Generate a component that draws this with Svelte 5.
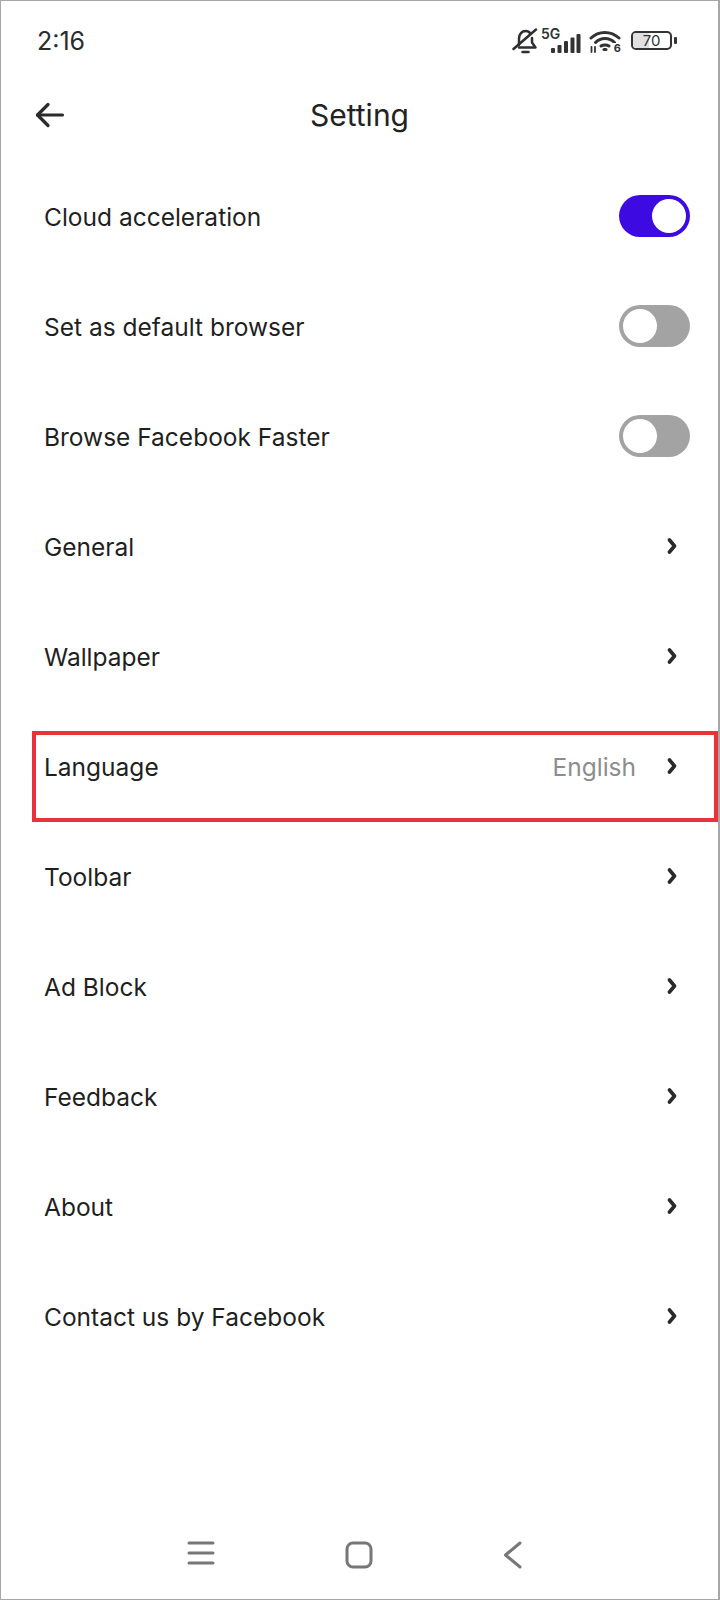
<script>
  const rows = [
    { label: 'Cloud acceleration', toggle: true, on: true },
    { label: 'Set as default browser', toggle: true, on: false },
    { label: 'Browse Facebook Faster', toggle: true, on: false },
    { label: 'General' },
    { label: 'Wallpaper' },
    { label: 'Language', value: 'English', marked: true },
    { label: 'Toolbar' },
    { label: 'Ad Block' },
    { label: 'Feedback' },
    { label: 'About' },
    { label: 'Contact us by Facebook' }
  ];
</script>

<div class="screen">
  <div class="status">
    <span class="time">2:16</span>
    <div class="status-icons">
      <svg class="bell" width="26" height="26" viewBox="0 0 26 26" fill="none" stroke="#2e2e2e" stroke-width="2.500" stroke-linecap="round" stroke-linejoin="round">
        <path d="M7 17V10.500C7 6 10 3 13.500 3c2.200 0 4 1 5 2.600" />
        <path d="M20 10v4.500l3.500 5H7" />
        <path d="M1.500 21 L24 1.500" />
        <path d="M10.500 24h6" />
      </svg>
      <div class="signal">
        <span class="net">5G</span>
        <svg width="30" height="20" viewBox="0 0 30 20" fill="#333">
          <rect x="0" y="14" width="4" height="5" rx="1" />
          <rect x="6.500" y="11" width="4" height="8" rx="1" />
          <rect x="13" y="7" width="4" height="12" rx="1" />
          <rect x="19.500" y="3.500" width="4" height="15.500" rx="1" />
          <rect x="25.500" y="0" width="4" height="19" rx="1" />
        </svg>
      </div>
      <div class="wifi">
        <svg width="32" height="24" viewBox="0 0 32 24" fill="none" stroke="#333" stroke-width="3" stroke-linecap="round">
          <path d="M2 9C9.500 1.500 22 1.500 30 9" />
          <path d="M6.500 13.500C11.500 8 20.500 8 25.500 13.500" />
          <path d="M12 17C14 15.500 18 15.500 20 17" />
          <path d="M15 20.500h2" stroke-width="3" />
          <path d="M2.500 18v5M6 23v-5" stroke-width="1.800" />
        </svg>
        <span class="wifi-gen">6</span>
      </div>
      <div class="battery">
        <div class="battery-body"><span class="battery-fill"></span><span class="battery-num">70</span></div>
        <span class="battery-nub"></span>
      </div>
    </div>
  </div>

  <header class="bar">
    <svg class="back" width="30" height="26" viewBox="0 0 30 26" fill="none" stroke="#2b2b2b" stroke-width="3.200" stroke-linecap="round" stroke-linejoin="round">
      <path d="M2.500 13H27.500" />
      <path d="M13 2.500 2.500 13 13 23.500" />
    </svg>
    <h1>Setting</h1>
  </header>

  <div class="list">
    {#each rows as row}
      <div class="row">
        <span class="label">{row.label}</span>
        {#if row.toggle}
          <span class="switch" class:on={row.on}><span class="knob"></span></span>
        {:else}
          {#if row.value}<span class="value">{row.value}</span>{/if}
          <svg class="chevron" width="10" height="16" viewBox="0 0 10 16" fill="none" stroke="#2a2a2a" stroke-width="3.600" stroke-linecap="round" stroke-linejoin="round">
            <path d="M2.500 2 7.500 8 2.500 14" />
          </svg>
        {/if}
        {#if row.marked}<span class="mark"></span>{/if}
      </div>
    {/each}
  </div>

  <nav class="nav">
    <svg width="28" height="24" viewBox="0 0 28 24" fill="none" stroke="#777" stroke-width="3" stroke-linecap="round">
      <path d="M2 2H26M2 12H26M2 22H26" />
    </svg>
    <svg width="28" height="28" viewBox="0 0 28 28" fill="none" stroke="#777" stroke-width="3">
      <rect x="2" y="2" width="24" height="24" rx="6" />
    </svg>
    <svg width="20" height="28" viewBox="0 0 20 28" fill="none" stroke="#777" stroke-width="3" stroke-linecap="round" stroke-linejoin="round">
      <path d="M17 2 2.500 14 17 26" />
    </svg>
  </nav>
</div>

<style>
  :global(body) {
    margin: 0;
    background: #fff;
  }

  .screen {
    width: 720px;
    height: 1600px;
    box-sizing: border-box;
    border: 1px solid #a6a6a6;
    border-width: 1px 2px 1px 1px;
    display: flex;
    flex-direction: column;
    font-family: Inter, "Noto Sans", sans-serif;
    color: #1f1f1f;
    background: #fff;
  }

  .status {
    height: 79px;
    display: flex;
    align-items: center;
    justify-content: space-between;
    padding: 0 41px 0 36px;
  }

  .time {
    font-size: 25px;
    color: #2c2c2c;
  }

  .status-icons {
    display: flex;
    align-items: center;
    gap: 8px;
  }

  .bell {
    margin-right: -5px;
  }

  .signal {
    position: relative;
    width: 40px;
    height: 26px;
    display: flex;
    justify-content: flex-end;
    align-items: flex-end;
  }

  .net {
    position: absolute;
    left: 0;
    top: -3px;
    font-size: 14px;
    font-weight: 600;
    color: #333;
  }

  .wifi {
    position: relative;
    display: flex;
    width: 32px;
    height: 24px;
  }

  .wifi-gen {
    position: absolute;
    right: 0;
    bottom: -1px;
    font-size: 11px;
    font-weight: 700;
    line-height: 1;
    color: #333;
    background: #fff;
    padding-left: 1px;
  }

  .battery {
    display: flex;
    align-items: center;
    gap: 2px;
    margin-left: 2px;
  }

  .battery-body {
    position: relative;
    width: 41px;
    height: 19px;
    box-sizing: border-box;
    border: 2px solid #333;
    border-radius: 5px;
    display: flex;
    align-items: center;
    justify-content: center;
    overflow: hidden;
  }

  .battery-fill {
    position: absolute;
    left: 0;
    top: 0;
    bottom: 0;
    width: 16px;
    background: #e0e0e0;
  }

  .battery-num {
    position: relative;
    font-size: 15px;
    color: #333;
    line-height: 1;
  }

  .battery-nub {
    width: 3px;
    height: 7px;
    background: #333;
    border-radius: 1px;
  }

  .bar {
    position: relative;
    height: 70px;
    display: flex;
    align-items: center;
    justify-content: center;
    margin-bottom: 12px;
  }

  .back {
    position: absolute;
    left: 34px;
    top: 22px;
  }

  h1 {
    margin: 0;
    font-size: 30px;
    font-weight: 400;
    color: #222;
  }

  .list {
    display: flex;
    flex-direction: column;
    margin-top: -1px;
  }

  .row {
    position: relative;
    height: 110px;
    display: flex;
    align-items: center;
    padding: 0 28px 0 43px;
    font-size: 24.500px;
  }

  .label {
    flex: 1;
    padding-top: 2px;
  }

  .value {
    color: #8d8d8d;
    margin-right: 31px;
    padding-top: 2px;
  }

  .chevron {
    margin-right: 13px;
  }

  .mark {
    position: absolute;
    left: 31px;
    right: 0;
    top: 20px;
    bottom: -1px;
    border: 4px solid #e8323c;
  }

  .switch {
    width: 71px;
    height: 42px;
    box-sizing: border-box;
    padding: 4px;
    border-radius: 21px;
    background: #a3a3a3;
    display: flex;
  }

  .switch.on {
    background: #3e0ae2;
    justify-content: flex-end;
  }

  .knob {
    width: 34px;
    height: 34px;
    border-radius: 50%;
    background: #fff;
  }

  .nav {
    margin-top: auto;
    height: 58px;
    padding: 0 195px 0 186px;
    display: flex;
    justify-content: space-between;
    align-items: flex-start;
  }
</style>
